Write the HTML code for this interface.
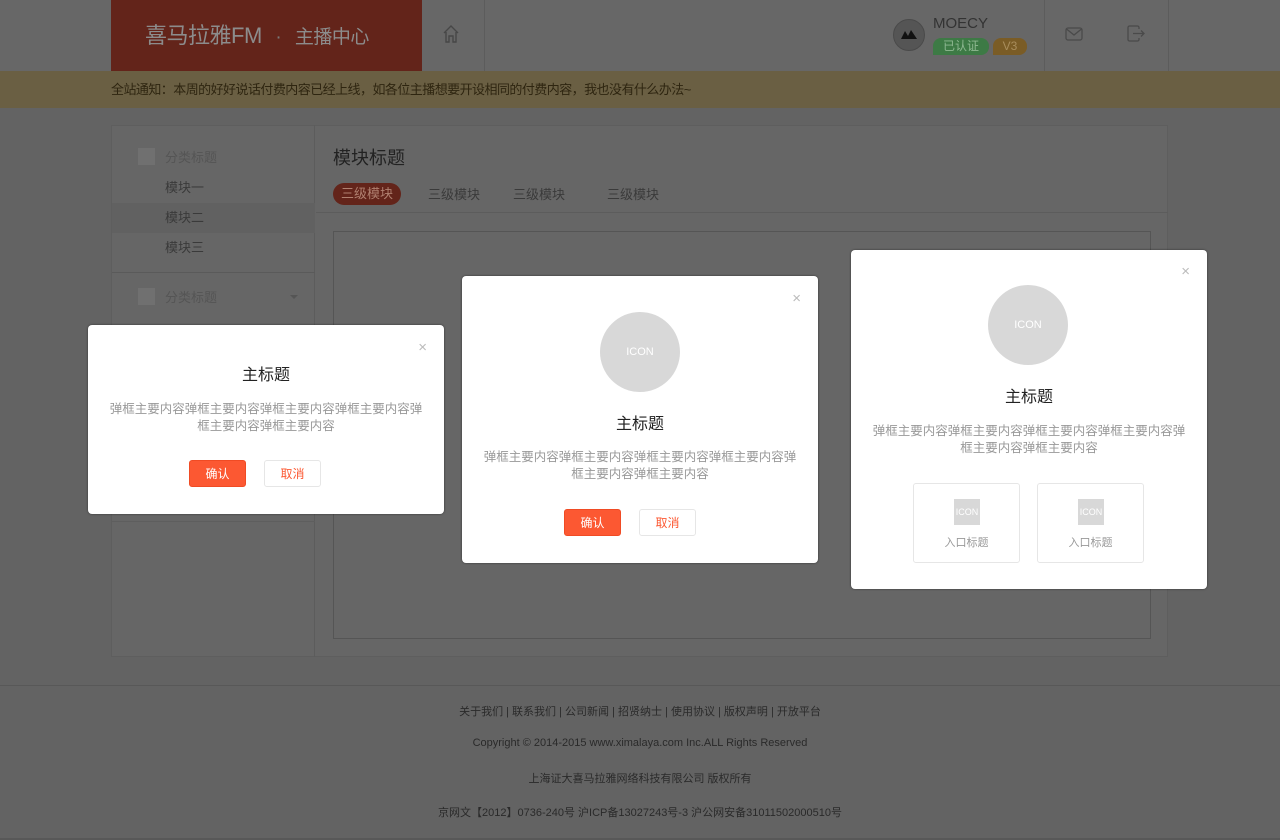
<!DOCTYPE html>
<html><head><meta charset="utf-8"><style>
*{margin:0;padding:0;box-sizing:border-box}
body{width:1280px;height:840px;background:#636363;font-family:"Liberation Sans","Noto Sans CJK SC",sans-serif;position:relative;overflow:hidden}
.a{position:absolute}
.hdr{left:0;top:0;width:1280px;height:71px;background:#676767}
.notice{left:0;top:71px;width:1280px;height:37px;background:#6a5f43;color:#2e2510;font-size:13px;line-height:37px;padding-left:111px;letter-spacing:-.55px}
.logo{left:111px;top:0;width:311px;height:71px;background:#63241a;color:#8c8c8c;font-size:22px;line-height:71px;padding-left:34px;letter-spacing:-.5px}
.logo span{font-size:19px}
.vl{width:1px;background:#5c5c5c}
.panel{left:111px;top:125px;width:1057px;height:532px;background:#666;border:1px solid #5e5e5e}
.side{left:111px;top:125px;width:204px;height:532px;border-right:1px solid #5c5c5c}
.si{font-size:13px;color:#3a3a3a}
.sq{width:17px;height:17px;background:#707070}
.modal{background:#fff;border-radius:4px;width:356px;box-shadow:0 0 2px rgba(0,0,0,.5)}
.modal .t{position:absolute;left:0;width:100%;text-align:center;font-size:16px;color:#222}
.modal .c{position:absolute;left:8px;width:340px;text-align:center;font-size:12.5px;color:#999;line-height:17px}
.x{position:absolute;right:17px;font-size:15px;color:#bbb}
.btn{position:absolute;width:57px;height:27px;border-radius:3px;font-size:12px;text-align:center;line-height:26px}
.ok{background:#fc5832;border:1px solid #f04b24;color:#fff}
.no{background:#fff;border:1px solid #e6e6e6;color:#fc5832}
.circ{position:absolute;width:80px;height:80px;border-radius:50%;background:#d8d8d8;color:#fff;font-size:11px;text-align:center;line-height:80px}
.ent{position:absolute;top:233px;width:107px;height:80px;border:1px solid #e6e6e6;border-radius:3px}
.ent i{position:absolute;left:40px;top:15px;width:26px;height:26px;background:#d8d8d8;color:#fff;font-style:normal;font-size:9px;line-height:26px;text-align:center}
.ent b{position:absolute;left:0;top:50px;width:100%;text-align:center;font-weight:normal;font-size:11px;color:#999}
.ft{left:0;width:1280px;text-align:center;font-size:11px;color:#2a2a2a}
</style></head><body>
<div class="a hdr"></div>
<div class="a logo">喜马拉雅FM <span style="color:#7a7a7a;padding:0 8px">·</span> <span>主播中心</span></div>
<div class="a vl" style="left:484px;top:0;height:71px"></div>
<div class="a vl" style="left:1044px;top:0;height:71px"></div>
<div class="a vl" style="left:1168px;top:0;height:71px"></div>
<svg class="a" style="left:442px;top:24px" width="18" height="20" viewBox="0 0 18 20"><path d="M2 9 L9 2 L16 9 M4 8 V18 H7 V12 H11 V18 H14 V8" fill="none" stroke="#474747" stroke-width="1.4"/></svg>
<div class="a" style="left:893px;top:19px;width:32px;height:32px;border-radius:50%;background:#555;border:1px solid #4a4a4a"></div>
<svg class="a" style="left:900px;top:28px" width="18" height="12" viewBox="0 0 18 12"><path d="M1 11 L5 3 L8 8 L11 2 L17 11 Z" fill="#111"/></svg>
<div class="a" style="left:933px;top:15px;font-size:15px;color:#333">MOECY</div>
<div class="a" style="left:933px;top:38px;width:56px;height:17px;background:#3d7a45;border-radius:8px 8px 8px 0;color:#8fb892;font-size:12px;text-align:center;line-height:17px">已认证</div>
<div class="a" style="left:993px;top:38px;width:34px;height:17px;background:#7a5c26;border-radius:8px 8px 8px 0;color:#a88d5c;font-size:12px;text-align:center;line-height:17px">V3</div>
<svg class="a" style="left:1065px;top:26px" width="18" height="16" viewBox="0 0 18 16"><rect x="1" y="2" width="16" height="12" rx="2" fill="none" stroke="#4a4a4a" stroke-width="1.3"/><path d="M1.5 3 L9 9 L16.5 3" fill="none" stroke="#4a4a4a" stroke-width="1.3"/></svg>
<svg class="a" style="left:1127px;top:25px" width="19" height="17" viewBox="0 0 19 17"><path d="M12 4 V2.5 A1.5 1.5 0 0 0 10.5 1 H2.5 A1.5 1.5 0 0 0 1 2.5 V14.5 A1.5 1.5 0 0 0 2.5 16 H10.5 A1.5 1.5 0 0 0 12 14.5 V13 M6 8.5 H17 M14 5.5 L17 8.5 L14 11.5" fill="none" stroke="#4a4a4a" stroke-width="1.3"/></svg>
<div class="a notice">全站通知：本周的好好说话付费内容已经上线，如各位主播想要开设相同的付费内容，我也没有什么办法~</div>

<div class="a panel"></div>
<div class="a side"></div>
<div class="a sq" style="left:138px;top:148px"></div>
<div class="a si" style="left:165px;top:147px;color:#555">分类标题</div>
<div class="a si" style="left:165px;top:177px">模块一</div>
<div class="a" style="left:112px;top:203px;width:203px;height:30px;background:#616161"></div>
<div class="a si" style="left:165px;top:207px">模块二</div>
<div class="a si" style="left:165px;top:237px">模块三</div>
<div class="a" style="left:112px;top:272px;width:203px;height:1px;background:#5a5a5a"></div>
<div class="a sq" style="left:138px;top:288px"></div>
<div class="a si" style="left:165px;top:287px;color:#555">分类标题</div>
<div class="a" style="left:290px;top:295px;border:4px solid transparent;border-top-color:#555"></div>
<div class="a" style="left:112px;top:521px;width:203px;height:1px;background:#5e5e5e"></div>
<div class="a" style="left:333px;top:144px;font-size:18px;color:#222">模块标题</div>
<div class="a" style="left:333px;top:183px;width:68px;height:22px;background:#63241a;border-radius:11px;color:#b08070;font-size:13px;text-align:center;line-height:22px">三级模块</div>
<div class="a si" style="left:428px;top:184px">三级模块</div>
<div class="a si" style="left:513px;top:184px">三级模块</div>
<div class="a si" style="left:607px;top:184px">三级模块</div>
<div class="a" style="left:316px;top:212px;width:852px;height:1px;background:#5c5c5c"></div>
<div class="a" style="left:333px;top:231px;width:818px;height:408px;border:1px solid #555"></div>

<div class="a" style="left:0;top:685px;width:1280px;height:1px;background:#585858"></div>
<div class="a ft" style="top:703px">关于我们 | 联系我们 | 公司新闻 | 招贤纳士 | 使用协议 | 版权声明 | 开放平台</div>
<div class="a ft" style="top:737px">Copyright © 2014-2015 www.ximalaya.com Inc.ALL Rights Reserved</div>
<div class="a ft" style="top:770px">上海证大喜马拉雅网络科技有限公司 版权所有</div>
<div class="a ft" style="top:804px">京网文【2012】0736-240号 沪ICP备13027243号-3 沪公网安备31011502000510号</div>
<div class="a" style="left:0;top:838px;width:1280px;height:2px;background:#585858"></div>

<div class="a modal" style="left:88px;top:325px;height:189px">
<div class="x" style="top:14px">×</div>
<div class="t" style="top:36px">主标题</div>
<div class="c" style="top:76px">弹框主要内容弹框主要内容弹框主要内容弹框主要内容弹<br>框主要内容弹框主要内容</div>
<div class="btn ok" style="left:101px;top:135px">确认</div>
<div class="btn no" style="left:176px;top:135px">取消</div>
</div>

<div class="a modal" style="left:462px;top:276px;height:287px">
<div class="x" style="top:14px">×</div>
<div class="circ" style="left:138px;top:36px">ICON</div>
<div class="t" style="top:134px">主标题</div>
<div class="c" style="top:173px">弹框主要内容弹框主要内容弹框主要内容弹框主要内容弹<br>框主要内容弹框主要内容</div>
<div class="btn ok" style="left:102px;top:233px">确认</div>
<div class="btn no" style="left:177px;top:233px">取消</div>
</div>

<div class="a modal" style="left:851px;top:250px;height:339px">
<div class="x" style="top:13px">×</div>
<div class="circ" style="left:137px;top:35px">ICON</div>
<div class="t" style="top:133px">主标题</div>
<div class="c" style="top:173px">弹框主要内容弹框主要内容弹框主要内容弹框主要内容弹<br>框主要内容弹框主要内容</div>
<div class="ent" style="left:62px"><i>ICON</i><b>入口标题</b></div>
<div class="ent" style="left:186px"><i>ICON</i><b>入口标题</b></div>
</div>
</body></html>
